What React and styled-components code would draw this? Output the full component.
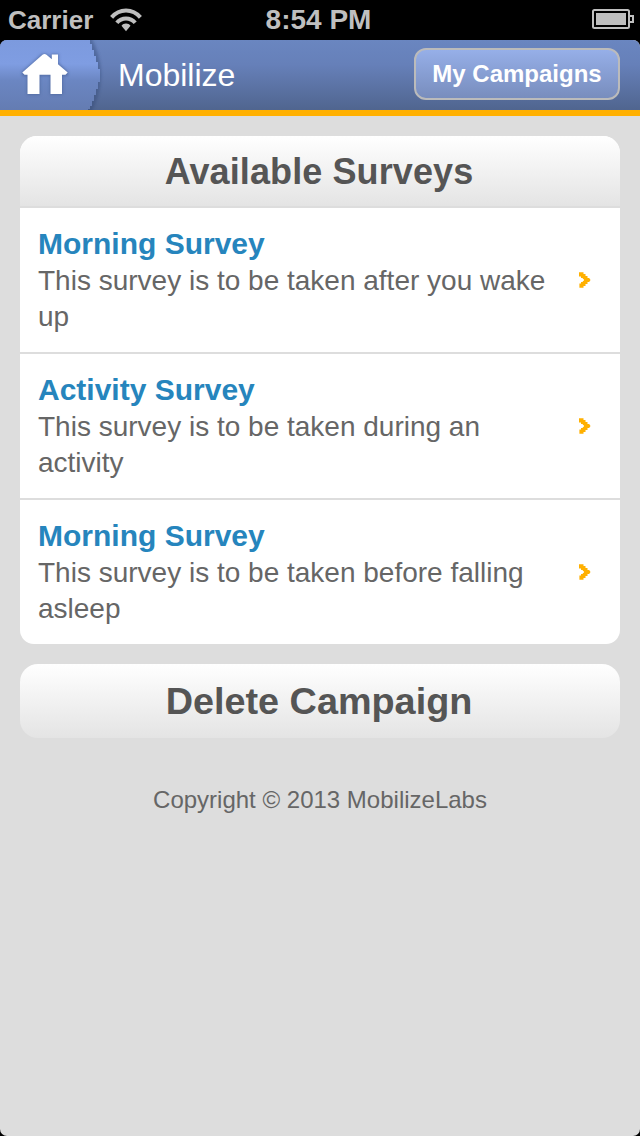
import React from "react";
import styled, { createGlobalStyle } from "styled-components";

const GlobalStyle = createGlobalStyle`
  * { box-sizing: border-box; }
  body {
    margin: 0;
    background: #000;
    font-family: "Liberation Sans", Arial, Helvetica, sans-serif;
  }
`;

const Phone = styled.div`
  width: 640px;
  height: 1136px;
  display: flex;
  flex-direction: column;
  overflow: hidden;
`;

const StatusBar = styled.div`
  flex: none;
  height: 40px;
  display: grid;
  grid-template-columns: 1fr auto 1fr;
  align-items: center;
  padding: 0 6px 0 8px;
  color: #bfbfbf;
  font-weight: bold;
`;

const Carrier = styled.div`
  display: flex;
  align-items: center;
  gap: 17px;
  font-size: 26px;
  line-height: 40px;
`;

const Clock = styled.div`
  padding-right: 5px;
  font-size: 28px;
  line-height: 40px;
`;

const BatteryIcon = styled.svg`
  justify-self: end;
  margin-top: -2px;
`;

const Screen = styled.div`
  flex: 1;
  border-radius: 7px;
  background: #ddd;
  overflow: hidden;
`;

const NavBar = styled.header`
  height: 76px;
  display: flex;
  align-items: center;
  padding-right: 20px;
  border-bottom: 6px solid #ffb000;
  background: linear-gradient(#6a86c0 0%, #6680b9 35%, #50658f 100%);
`;

const HomeTab = styled.svg`
  flex: none;
`;

const NavTitle = styled.h1`
  flex: 1;
  margin: 0 0 0 14px;
  color: #fff;
  font-size: 32px;
  font-weight: normal;
  line-height: 36px;
`;

const NavButton = styled.button`
  width: 206px;
  height: 52px;
  margin-top: -2px;
  padding: 0;
  border: 2px solid #bbb;
  border-radius: 12px;
  background: linear-gradient(#96afe8, #788dbd);
  color: #fff;
  font: bold 24px/48px "Liberation Sans", Arial, sans-serif;
`;

const Content = styled.main`
  display: flex;
  flex-direction: column;
  gap: 20px;
  padding: 20px;
`;

const Menu = styled.section`
  border-radius: 17px 17px 14px 14px;
  background: #fff;
  overflow: hidden;
`;

const MenuHeading = styled.h2`
  height: 70px;
  margin: 0;
  padding-right: 2px;
  background: linear-gradient(#fff, #e4e4e4);
  color: #555;
  font-size: 36px;
  letter-spacing: 0.1px;
  line-height: 72px;
  text-align: center;
`;

const SurveyRow = styled.a`
  height: 146px;
  display: flex;
  align-items: center;
  justify-content: space-between;
  padding: 0 29px 0 18px;
  border-top: 2px solid #ddd;
`;

const SurveyText = styled.div`
  width: 520px;
`;

const SurveyName = styled.div`
  color: #2685bd;
  font-size: 30px;
  font-weight: bold;
  line-height: 36px;
`;

const SurveyDescription = styled.div`
  padding-top: 1px;
  margin-bottom: -1px;
  color: #666;
  font-size: 28px;
  line-height: 36px;
`;

const DeleteButton = styled.button`
  height: 74px;
  padding: 0 2px 0 0;
  border: 0;
  border-radius: 18px;
  background: linear-gradient(#fff, #e4e4e4);
  color: #555;
  font: bold 37.8px/74px "Liberation Sans", Arial, sans-serif;
`;

const Footer = styled.footer`
  margin-top: 28px;
  color: #666;
  font-size: 24px;
  line-height: 28px;
  text-align: center;
`;

const surveys = [
  { name: "Morning Survey", description: "This survey is to be taken after you wake up" },
  { name: "Activity Survey", description: "This survey is to be taken during an activity" },
  { name: "Morning Survey", description: "This survey is to be taken before falling asleep" },
];

const Wifi = () => (
  <svg width="32" height="24" viewBox="0 0 32 24" fill="none" stroke="#bfbfbf" strokeWidth="4">
    <path d="M1.6 9.4C9.4.2 22.6.2 30.4 9.4" />
    <path d="M6.8 14.8C11.8 9 20.2 9 25.2 14.8" />
    <path d="M16 15.6c-1.9 0-3.4.8-4.5 2.1L16 23.2l4.5-5.5c-1.1-1.3-2.6-2.1-4.5-2.1Z" fill="#bfbfbf" stroke="none" />
  </svg>
);

const Battery = () => (
  <BatteryIcon width="42" height="20" viewBox="0 0 42 20">
    <rect x="1" y="1" width="36" height="18" rx="1.5" fill="none" stroke="#bfbfbf" strokeWidth="2" />
    <rect x="4" y="4" width="30" height="12" fill="#bfbfbf" />
    <path d="M38 7h3v6h-3" fill="none" stroke="#bfbfbf" strokeWidth="2" />
  </BatteryIcon>
);

const Home = () => (
  <HomeTab width="104" height="70" viewBox="0 0 104 70">
    <defs>
      <linearGradient id="tab" x1="0" y1="0" x2="0" y2="1">
        <stop offset="0" stopColor="#7c9ade" />
        <stop offset=".34" stopColor="#7f9de2" />
        <stop offset=".58" stopColor="#6b86c2" />
        <stop offset="1" stopColor="#647cb2" />
      </linearGradient>
      <filter id="soft" x="-20%" y="-20%" width="140%" height="140%">
        <feGaussianBlur stdDeviation="1.5" />
      </filter>
    </defs>
    <path d="M0-5H90Q112 35 90 75H0Z" fill="#2d4472" opacity=".4" filter="url(#soft)" />
    <path d="M0 0H90V4h2v6h2v6h2v6h2v7h2v13h-2v7h-2v6h-2v6h-2v5h-2v3h-2v1H0Z" fill="url(#tab)" />
    <path
      d="M22 34V32L42 14H47L51 18V14H58.5V23L68 32V36H62.5V54.5H50V36H40V54.5H27V36H22Z"
      fill="#3e5689"
      opacity=".6"
      filter="url(#soft)"
    />
    <path
      d="M22.3 32.4 42.5 14.8Q44.5 13.4 46.5 14.8L51.8 19.2V14.4H58V24.2L67.7 32.4 65.5 34.8H62V54H50.5V34.8H39.5V54H27.5V34.8H24.5Z"
      fill="#fff"
    />
  </HomeTab>
);

const Chevron = () => (
  <svg width="12" height="16" viewBox="0 0 12 16" fill="#ffb000">
    <path d="M0 .3H4.5V2H6.5V4H8.5V6H10.5V7H11.2V9H10.5V10H8.5V12H6.5V14H4.5V15.8H.4V11.6H2V10H3.8V9H4.8V7H3.8V6H2V4.4H0Z" />
  </svg>
);

export default function App() {
  return (
    <>
      <GlobalStyle />
      <Phone>
        <StatusBar>
          <Carrier>
            Carrier
            <Wifi />
          </Carrier>
          <Clock>8:54 PM</Clock>
          <Battery />
        </StatusBar>
        <Screen>
          <NavBar>
            <Home />
            <NavTitle>Mobilize</NavTitle>
            <NavButton>My Campaigns</NavButton>
          </NavBar>
          <Content>
            <Menu>
              <MenuHeading>Available Surveys</MenuHeading>
              {surveys.map((survey, index) => (
                <SurveyRow key={index}>
                  <SurveyText>
                    <SurveyName>{survey.name}</SurveyName>
                    <SurveyDescription>{survey.description}</SurveyDescription>
                  </SurveyText>
                  <Chevron />
                </SurveyRow>
              ))}
            </Menu>
            <DeleteButton>Delete Campaign</DeleteButton>
            <Footer>Copyright © 2013 MobilizeLabs</Footer>
          </Content>
        </Screen>
      </Phone>
    </>
  );
}
